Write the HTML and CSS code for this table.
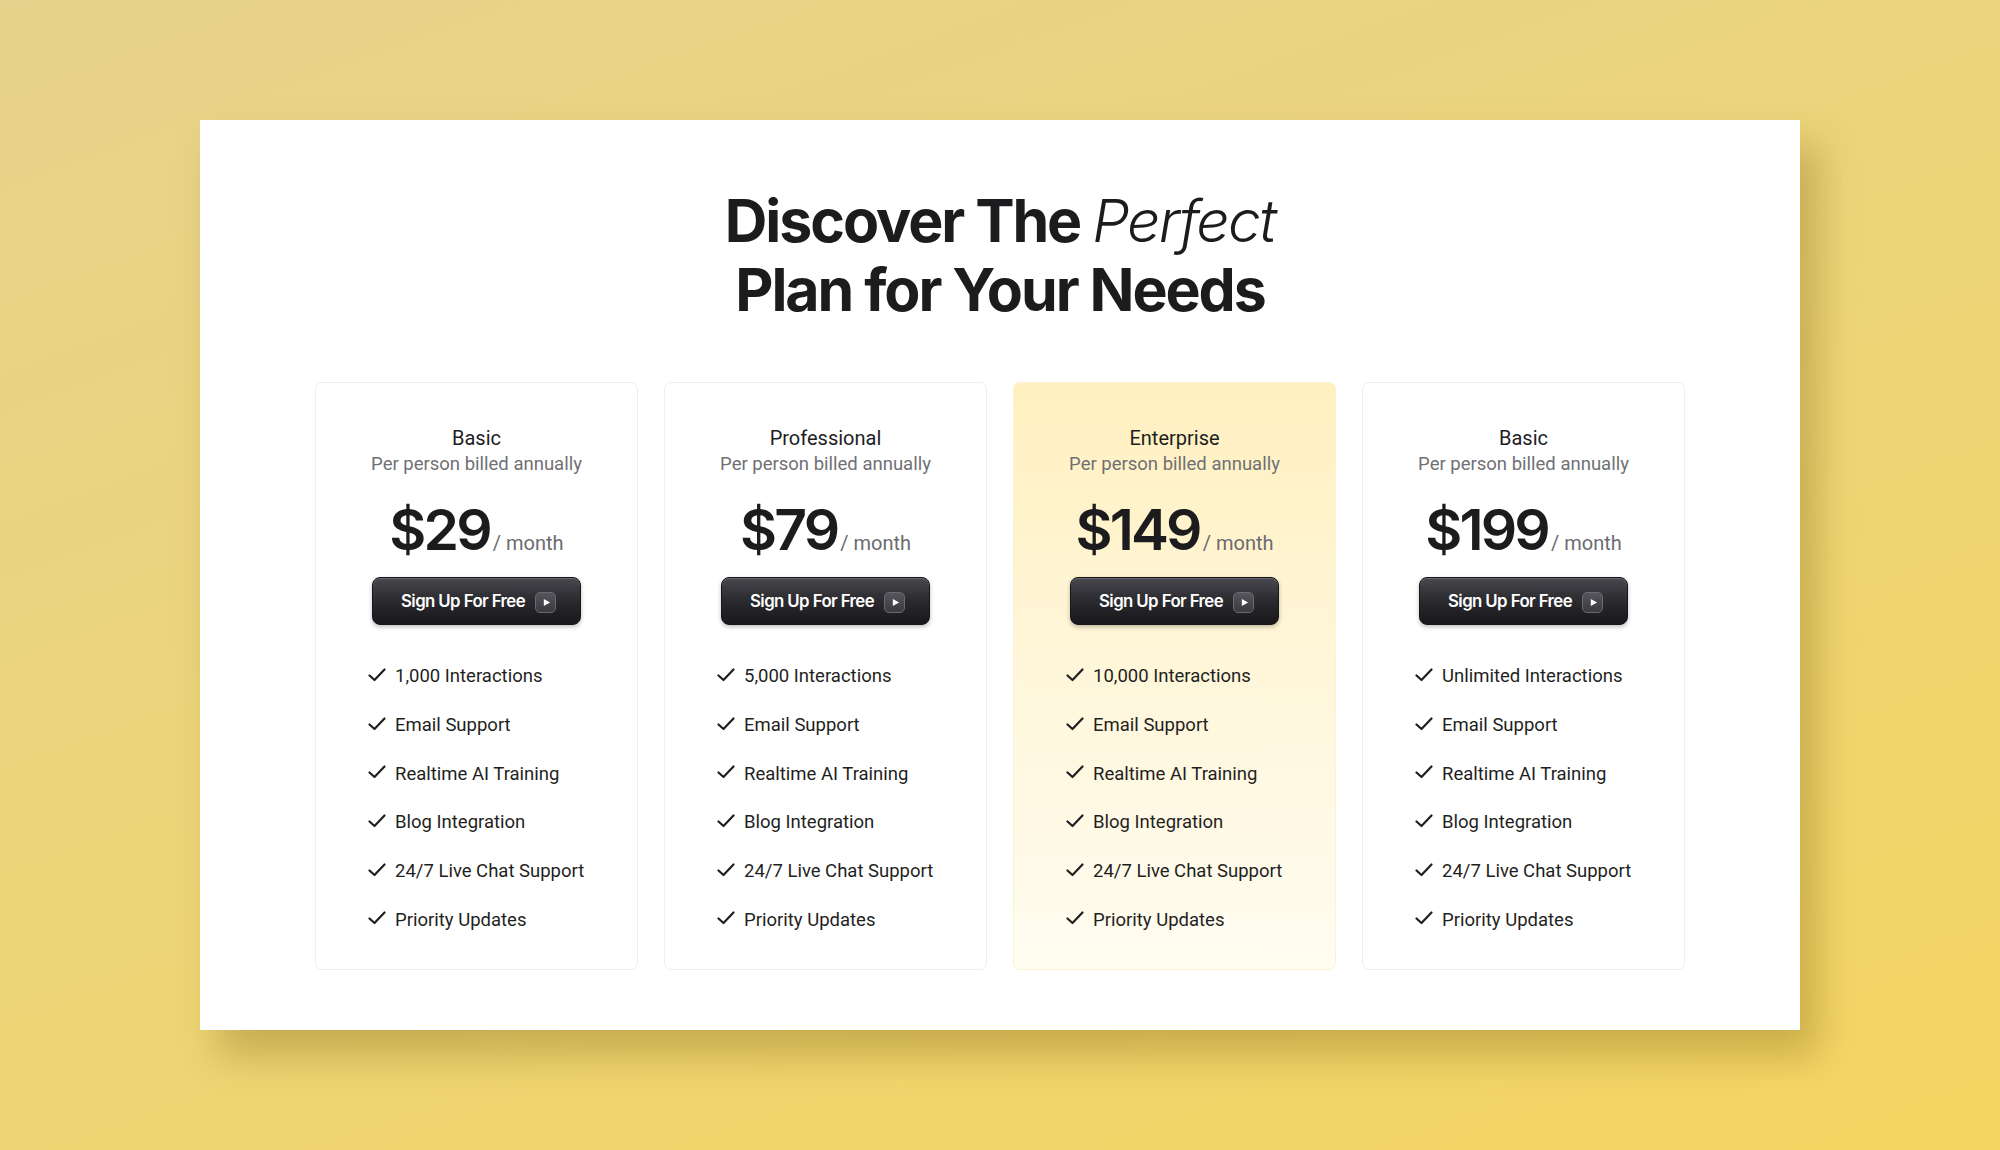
FILE: index.html
```html
<!DOCTYPE html>
<html lang="en">
<head>
<meta charset="utf-8">
<title>Pricing</title>
<link rel="stylesheet" href="styles.css">
</head>
<body>
<main class="stage">
  <section class="panel">
    <h1 class="title">Discover The <em>Perfect</em><br>Plan for Your Needs</h1>
    <div class="plans">
      <article class="plan">
        <h2 class="plan-name">Basic</h2>
        <p class="plan-sub">Per person billed annually</p>
        <div class="price"><span class="amount">$29</span><span class="per">/ month</span></div>
        <button class="cta">Sign Up For Free <span class="play"><svg viewBox="0 0 10 10" width="9" height="9"><path d="M2 1 L9 5 L2 9 Z" fill="#fff"/></svg></span></button>
        <ul class="features">
          <li><svg class="check" viewBox="0 0 18 14" width="18" height="14"><path d="M1.5 7.5 L6.5 12 L16.5 1.5" fill="none" stroke="#1f1f22" stroke-width="2.2" stroke-linecap="round" stroke-linejoin="round"/></svg>1,000 Interactions</li>
          <li><svg class="check" viewBox="0 0 18 14" width="18" height="14"><path d="M1.5 7.5 L6.5 12 L16.5 1.5" fill="none" stroke="#1f1f22" stroke-width="2.2" stroke-linecap="round" stroke-linejoin="round"/></svg>Email Support</li>
          <li><svg class="check" viewBox="0 0 18 14" width="18" height="14"><path d="M1.5 7.5 L6.5 12 L16.5 1.5" fill="none" stroke="#1f1f22" stroke-width="2.2" stroke-linecap="round" stroke-linejoin="round"/></svg>Realtime AI Training</li>
          <li><svg class="check" viewBox="0 0 18 14" width="18" height="14"><path d="M1.5 7.5 L6.5 12 L16.5 1.5" fill="none" stroke="#1f1f22" stroke-width="2.2" stroke-linecap="round" stroke-linejoin="round"/></svg>Blog Integration</li>
          <li><svg class="check" viewBox="0 0 18 14" width="18" height="14"><path d="M1.5 7.5 L6.5 12 L16.5 1.5" fill="none" stroke="#1f1f22" stroke-width="2.2" stroke-linecap="round" stroke-linejoin="round"/></svg>24/7 Live Chat Support</li>
          <li><svg class="check" viewBox="0 0 18 14" width="18" height="14"><path d="M1.5 7.5 L6.5 12 L16.5 1.5" fill="none" stroke="#1f1f22" stroke-width="2.2" stroke-linecap="round" stroke-linejoin="round"/></svg>Priority Updates</li>
        </ul>
      </article>
      <article class="plan">
        <h2 class="plan-name">Professional</h2>
        <p class="plan-sub">Per person billed annually</p>
        <div class="price"><span class="amount">$79</span><span class="per">/ month</span></div>
        <button class="cta">Sign Up For Free <span class="play"><svg viewBox="0 0 10 10" width="9" height="9"><path d="M2 1 L9 5 L2 9 Z" fill="#fff"/></svg></span></button>
        <ul class="features">
          <li><svg class="check" viewBox="0 0 18 14" width="18" height="14"><path d="M1.5 7.5 L6.5 12 L16.5 1.5" fill="none" stroke="#1f1f22" stroke-width="2.2" stroke-linecap="round" stroke-linejoin="round"/></svg>5,000 Interactions</li>
          <li><svg class="check" viewBox="0 0 18 14" width="18" height="14"><path d="M1.5 7.5 L6.5 12 L16.5 1.5" fill="none" stroke="#1f1f22" stroke-width="2.2" stroke-linecap="round" stroke-linejoin="round"/></svg>Email Support</li>
          <li><svg class="check" viewBox="0 0 18 14" width="18" height="14"><path d="M1.5 7.5 L6.5 12 L16.5 1.5" fill="none" stroke="#1f1f22" stroke-width="2.2" stroke-linecap="round" stroke-linejoin="round"/></svg>Realtime AI Training</li>
          <li><svg class="check" viewBox="0 0 18 14" width="18" height="14"><path d="M1.5 7.5 L6.5 12 L16.5 1.5" fill="none" stroke="#1f1f22" stroke-width="2.2" stroke-linecap="round" stroke-linejoin="round"/></svg>Blog Integration</li>
          <li><svg class="check" viewBox="0 0 18 14" width="18" height="14"><path d="M1.5 7.5 L6.5 12 L16.5 1.5" fill="none" stroke="#1f1f22" stroke-width="2.2" stroke-linecap="round" stroke-linejoin="round"/></svg>24/7 Live Chat Support</li>
          <li><svg class="check" viewBox="0 0 18 14" width="18" height="14"><path d="M1.5 7.5 L6.5 12 L16.5 1.5" fill="none" stroke="#1f1f22" stroke-width="2.2" stroke-linecap="round" stroke-linejoin="round"/></svg>Priority Updates</li>
        </ul>
      </article>
      <article class="plan plan-featured">
        <h2 class="plan-name">Enterprise</h2>
        <p class="plan-sub">Per person billed annually</p>
        <div class="price"><span class="amount">$149</span><span class="per">/ month</span></div>
        <button class="cta">Sign Up For Free <span class="play"><svg viewBox="0 0 10 10" width="9" height="9"><path d="M2 1 L9 5 L2 9 Z" fill="#fff"/></svg></span></button>
        <ul class="features">
          <li><svg class="check" viewBox="0 0 18 14" width="18" height="14"><path d="M1.5 7.5 L6.5 12 L16.5 1.5" fill="none" stroke="#1f1f22" stroke-width="2.2" stroke-linecap="round" stroke-linejoin="round"/></svg>10,000 Interactions</li>
          <li><svg class="check" viewBox="0 0 18 14" width="18" height="14"><path d="M1.5 7.5 L6.5 12 L16.5 1.5" fill="none" stroke="#1f1f22" stroke-width="2.2" stroke-linecap="round" stroke-linejoin="round"/></svg>Email Support</li>
          <li><svg class="check" viewBox="0 0 18 14" width="18" height="14"><path d="M1.5 7.5 L6.5 12 L16.5 1.5" fill="none" stroke="#1f1f22" stroke-width="2.2" stroke-linecap="round" stroke-linejoin="round"/></svg>Realtime AI Training</li>
          <li><svg class="check" viewBox="0 0 18 14" width="18" height="14"><path d="M1.5 7.5 L6.5 12 L16.5 1.5" fill="none" stroke="#1f1f22" stroke-width="2.2" stroke-linecap="round" stroke-linejoin="round"/></svg>Blog Integration</li>
          <li><svg class="check" viewBox="0 0 18 14" width="18" height="14"><path d="M1.5 7.5 L6.5 12 L16.5 1.5" fill="none" stroke="#1f1f22" stroke-width="2.2" stroke-linecap="round" stroke-linejoin="round"/></svg>24/7 Live Chat Support</li>
          <li><svg class="check" viewBox="0 0 18 14" width="18" height="14"><path d="M1.5 7.5 L6.5 12 L16.5 1.5" fill="none" stroke="#1f1f22" stroke-width="2.2" stroke-linecap="round" stroke-linejoin="round"/></svg>Priority Updates</li>
        </ul>
      </article>
      <article class="plan">
        <h2 class="plan-name">Basic</h2>
        <p class="plan-sub">Per person billed annually</p>
        <div class="price"><span class="amount">$199</span><span class="per">/ month</span></div>
        <button class="cta">Sign Up For Free <span class="play"><svg viewBox="0 0 10 10" width="9" height="9"><path d="M2 1 L9 5 L2 9 Z" fill="#fff"/></svg></span></button>
        <ul class="features">
          <li><svg class="check" viewBox="0 0 18 14" width="18" height="14"><path d="M1.5 7.5 L6.5 12 L16.5 1.5" fill="none" stroke="#1f1f22" stroke-width="2.2" stroke-linecap="round" stroke-linejoin="round"/></svg>Unlimited Interactions</li>
          <li><svg class="check" viewBox="0 0 18 14" width="18" height="14"><path d="M1.5 7.5 L6.5 12 L16.5 1.5" fill="none" stroke="#1f1f22" stroke-width="2.2" stroke-linecap="round" stroke-linejoin="round"/></svg>Email Support</li>
          <li><svg class="check" viewBox="0 0 18 14" width="18" height="14"><path d="M1.5 7.5 L6.5 12 L16.5 1.5" fill="none" stroke="#1f1f22" stroke-width="2.2" stroke-linecap="round" stroke-linejoin="round"/></svg>Realtime AI Training</li>
          <li><svg class="check" viewBox="0 0 18 14" width="18" height="14"><path d="M1.5 7.5 L6.5 12 L16.5 1.5" fill="none" stroke="#1f1f22" stroke-width="2.2" stroke-linecap="round" stroke-linejoin="round"/></svg>Blog Integration</li>
          <li><svg class="check" viewBox="0 0 18 14" width="18" height="14"><path d="M1.5 7.5 L6.5 12 L16.5 1.5" fill="none" stroke="#1f1f22" stroke-width="2.2" stroke-linecap="round" stroke-linejoin="round"/></svg>24/7 Live Chat Support</li>
          <li><svg class="check" viewBox="0 0 18 14" width="18" height="14"><path d="M1.5 7.5 L6.5 12 L16.5 1.5" fill="none" stroke="#1f1f22" stroke-width="2.2" stroke-linecap="round" stroke-linejoin="round"/></svg>Priority Updates</li>
        </ul>
      </article>
    </div>
  </section>
</main>
</body>
</html>
```
FILE: styles.css
```css
* { box-sizing: border-box; }
html, body { margin: 0; padding: 0; }
body {
  width: 2000px;
  height: 1150px;
  overflow: hidden;
  font-family: Roboto, "Liberation Sans", sans-serif;
  background: linear-gradient(160deg, #e7d28b 0%, #ecd47a 45%, #f5d662 100%);
}
.stage {
  padding: 120px 200px 0 200px;
}
.panel {
  width: 1600px;
  height: 910px;
  background: #fff;
  box-shadow: 18px 26px 36px rgba(130, 100, 20, 0.35);
  padding-top: 66px;
  display: flex;
  flex-direction: column;
  align-items: center;
}
.title {
  margin: 0;
  font-family: Inter, "Liberation Sans", sans-serif;
  font-weight: 700;
  font-size: 59px;
  line-height: 69px;
  letter-spacing: -0.035em;
  text-align: center;
  color: #1c1c1e;
}
.title em {
  font-weight: 300;
  font-style: italic;
  letter-spacing: -0.03em;
}
.plans {
  margin-top: 58px;
  display: grid;
  grid-template-columns: repeat(4, 323px);
  gap: 26px;
}
.plan {
  height: 588px;
  border: 1px solid #efefef;
  border-radius: 7px;
  padding-top: 42px;
  display: flex;
  flex-direction: column;
  align-items: center;
  background: #fff;
}
.plan-featured {
  border-color: #fcf2d4;
  background: linear-gradient(180deg, #fff0bf 0%, #fff6d8 45%, #fffcf1 100%);
}
.plan-name {
  margin: 0;
  font-weight: 400;
  font-size: 20px;
  line-height: 26px;
  color: #1d1d1f;
}
.plan-sub {
  margin: 1px 0 0;
  font-size: 18.5px;
  line-height: 25px;
  color: #707074;
}
.price {
  margin-top: 21px;
  display: flex;
  align-items: baseline;
  height: 64px;
}
.amount {
  font-family: Inter, "Liberation Sans", sans-serif;
  font-weight: 600;
  font-size: 57px;
  line-height: 64px;
  letter-spacing: -0.05em;
  color: #1c1c1e;
}
.per {
  margin-left: 3px;
  font-size: 20px;
  color: #6b6b70;
}
.cta {
  margin-top: 15px;
  width: 209px;
  height: 48px;
  border: 1px solid #16161a;
  border-radius: 8px;
  background: linear-gradient(180deg, #48484e 0%, #2c2c31 45%, #18181b 100%);
  box-shadow: inset 0 1px 0 rgba(255,255,255,0.18), 0 2px 4px rgba(0,0,0,0.25);
  color: #fff;
  font-family: Inter, "Liberation Sans", sans-serif;
  font-weight: 600;
  font-size: 16.8px;
  letter-spacing: -0.035em;
  display: flex;
  align-items: center;
  justify-content: center;
  gap: 10px;
  padding: 0 0 0 4px;
}
.play {
  width: 21px;
  height: 21px;
  border-radius: 5px;
  background: linear-gradient(180deg, #55555b, #3a3a40);
  border: 1px solid #6a6a70;
  display: flex;
  align-items: center;
  justify-content: center;
  margin-top: 2px;
}
.play svg { margin-left: 1px; }
.features {
  list-style: none;
  margin: 27px 0 0;
  padding: 0 0 0 52px;
  align-self: stretch;
}
.features li {
  display: flex;
  align-items: center;
  gap: 9px;
  height: 48.7px;
  font-size: 18.5px;
  color: #1f1f22;
}
.check { flex: none; margin-top: -3px; }
```
